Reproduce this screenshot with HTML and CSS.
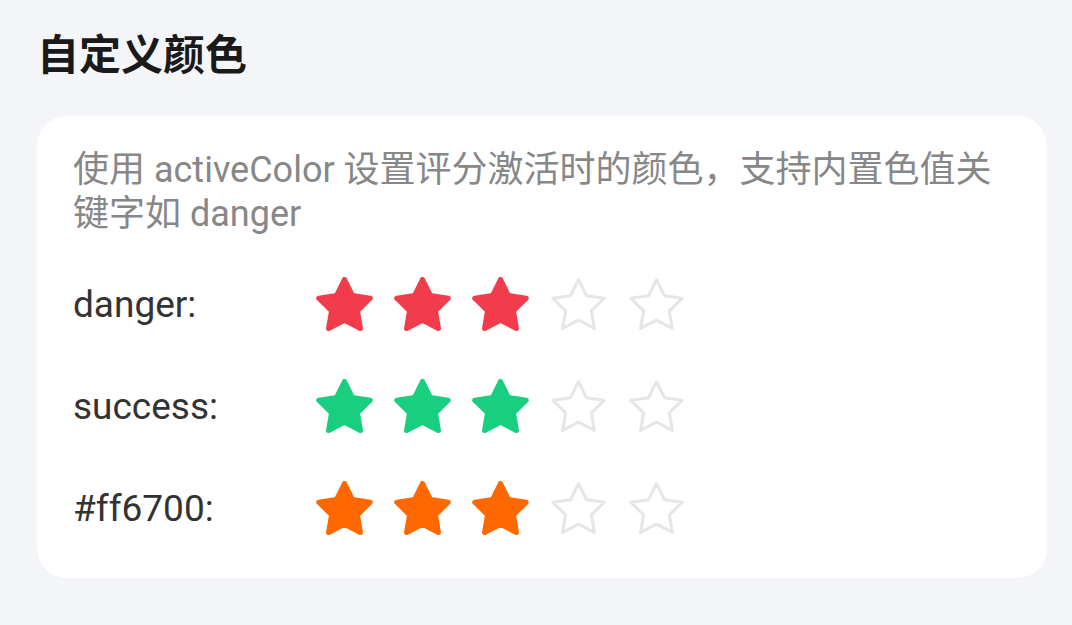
FILE: index.html
```html
<!DOCTYPE html>
<html lang="zh-CN">
<head>
<meta charset="utf-8">
<title>自定义颜色</title>
<link rel="stylesheet" href="styles.css">
</head>
<body>
<svg class="defs" width="0" height="0" aria-hidden="true">
  <defs>
    <polygon id="star" points="12,2 15.09,8.26 22,9.27 17,14.14 18.18,21.02 12,17.77 5.82,21.02 7,14.14 2,9.27 8.91,8.26"/>
  </defs>
</svg>
<main class="page">
  <h1 class="title">自定义颜色</h1>
  <section class="card">
    <p class="desc">使用 activeColor 设置评分激活时的颜色，支持内置色值关键字如 danger</p>
    <div class="rows">
      <div class="row">
        <span class="label">danger:</span>
        <div class="stars danger">
          <svg class="star on" viewBox="1 1 22 21"><use href="#star"/></svg>
          <svg class="star on" viewBox="1 1 22 21"><use href="#star"/></svg>
          <svg class="star on" viewBox="1 1 22 21"><use href="#star"/></svg>
          <svg class="star off" viewBox="1 1 22 21"><use href="#star"/></svg>
          <svg class="star off" viewBox="1 1 22 21"><use href="#star"/></svg>
        </div>
      </div>
      <div class="row">
        <span class="label">success:</span>
        <div class="stars success">
          <svg class="star on" viewBox="1 1 22 21"><use href="#star"/></svg>
          <svg class="star on" viewBox="1 1 22 21"><use href="#star"/></svg>
          <svg class="star on" viewBox="1 1 22 21"><use href="#star"/></svg>
          <svg class="star off" viewBox="1 1 22 21"><use href="#star"/></svg>
          <svg class="star off" viewBox="1 1 22 21"><use href="#star"/></svg>
        </div>
      </div>
      <div class="row">
        <span class="label">#ff6700:</span>
        <div class="stars orange">
          <svg class="star on" viewBox="1 1 22 21"><use href="#star"/></svg>
          <svg class="star on" viewBox="1 1 22 21"><use href="#star"/></svg>
          <svg class="star on" viewBox="1 1 22 21"><use href="#star"/></svg>
          <svg class="star off" viewBox="1 1 22 21"><use href="#star"/></svg>
          <svg class="star off" viewBox="1 1 22 21"><use href="#star"/></svg>
        </div>
      </div>
    </div>
  </section>
</main>
</body>
</html>
```
FILE: styles.css
```css
html, body {
  margin: 0;
  padding: 0;
  background: #f4f5f9;
}
body {
  font-family: Roboto, "Noto Sans CJK SC", sans-serif;
  width: 1072px;
  height: 625px;
  overflow: hidden;
}
.defs {
  position: absolute;
  width: 0;
  height: 0;
}
.page {
  padding: 23px 25px 0 37px;
}
.title {
  margin: 0 0 35px 0;
  font-family: "Noto Sans CJK SC", sans-serif;
  font-size: 42px;
  line-height: 58px;
  font-weight: 700;
  color: #1a1a1a;
}
.card {
  background: #ffffff;
  border-radius: 30px;
  padding: 32px 36px 43px 36px;
}
.desc {
  margin: 0;
  font-size: 36px;
  line-height: 44px;
  color: #878787;
}
.rows {
  margin-top: 41px;
  display: flex;
  flex-direction: column;
  gap: 48px;
}
.row {
  display: flex;
  align-items: center;
  height: 54px;
}
.label {
  width: 243px;
  font-size: 37px;
  color: #333333;
}
.stars {
  display: flex;
  gap: 21px;
}
.star {
  width: 57px;
  height: 54px;
  display: block;
}
.star.on {
  stroke-width: 2;
  stroke-linejoin: round;
}
.star.off {
  fill: none;
  stroke: #e6e6e6;
  stroke-width: 1.2;
  stroke-linejoin: round;
}
.danger .on { fill: #f23c4c; stroke: #f23c4c; }
.success .on { fill: #18cf80; stroke: #18cf80; }
.orange .on { fill: #ff6700; stroke: #ff6700; }
```
